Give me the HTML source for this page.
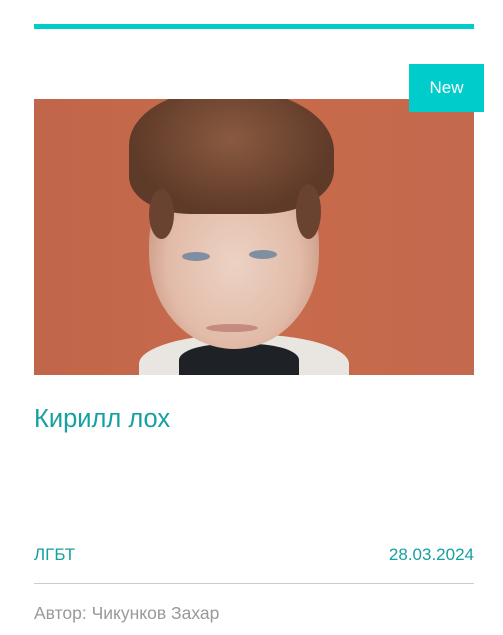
<!DOCTYPE html>
<html><head><meta charset="utf-8"><style>
*{margin:0;padding:0;box-sizing:border-box}
body{width:503px;height:635px;background:#fff;position:relative;overflow:hidden;font-family:"Liberation Sans",sans-serif}
.bar{position:absolute;left:34px;top:24px;width:440px;height:5px;background:#00cccc}
.img{position:absolute;left:34px;top:99px;width:440px;height:276px;overflow:hidden;background:linear-gradient(90deg,#c0664a 0%,#c96a4c 50%,#c3694d 100%)}
.img div{position:absolute}
.badge{position:absolute;left:409px;top:64px;width:75px;height:48px;background:#00cccc;color:#fff;font-size:17px;line-height:48px;text-align:center}
.t{position:absolute;left:34px;top:405px;font-size:25.5px;color:#16a0a0}
.cat{position:absolute;left:34px;top:545px;font-size:17px;color:#16a0a0}
.date{position:absolute;right:29px;top:545px;font-size:17px;color:#16a0a0}
.hr{position:absolute;left:34px;top:583px;width:440px;height:1px;background:#ccc}
.au{position:absolute;left:34px;top:603px;font-size:17.5px;color:#999}
</style></head><body>
<div class="bar"></div>
<div class="img">
 <div style="left:105px;top:235px;width:210px;height:60px;border-radius:50% 50% 0 0;background:#e9e6e2"></div>
 <div style="left:145px;top:245px;width:120px;height:40px;background:#1e2226;border-radius:40% 40% 0 0"></div>
 <div style="left:115px;top:60px;width:170px;height:190px;border-radius:45% 45% 50% 50%;background:radial-gradient(ellipse at 50% 55%,#ecd2c4 0%,#e2bba8 55%,#c89680 80%,transparent 81%)"></div>
 <div style="left:148px;top:153px;width:28px;height:9px;border-radius:50%;background:#7f8ea0"></div>
 <div style="left:215px;top:151px;width:28px;height:9px;border-radius:50%;background:#7f8ea0"></div>
 <div style="left:172px;top:225px;width:52px;height:8px;border-radius:50%;background:#c58a80"></div>
 <div style="left:95px;top:-10px;width:205px;height:125px;border-radius:45% 50% 35% 30%;background:radial-gradient(ellipse at 50% 40%,#8a5a40,#5e3a28 70%)"></div>
 <div style="left:115px;top:90px;width:25px;height:50px;border-radius:50%;background:#6a4230"></div>
 <div style="left:262px;top:85px;width:25px;height:55px;border-radius:50%;background:#6a4230"></div>
</div>
<div class="badge">New</div>
<div class="t">Кирилл лох</div>
<div class="cat">ЛГБТ</div>
<div class="date">28.03.2024</div>
<div class="hr"></div>
<div class="au">Автор: Чикунков Захар</div>
</body></html>
